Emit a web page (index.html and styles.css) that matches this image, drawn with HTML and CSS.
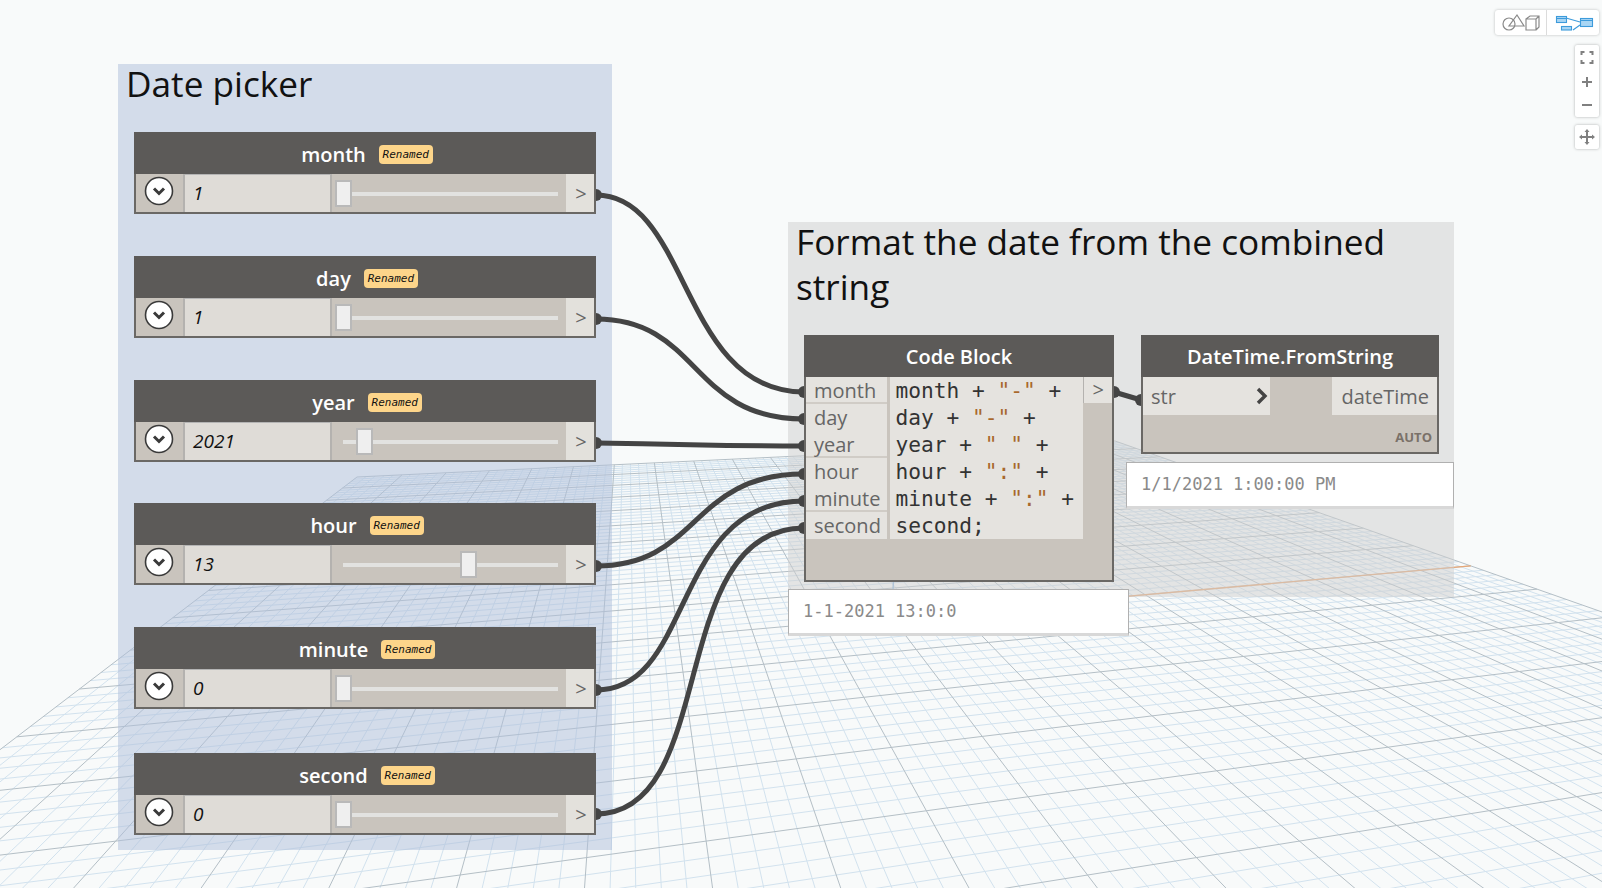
FILE: index.html
```html
<!DOCTYPE html>
<html lang="en">
<head>
    <meta charset="UTF-8">
    <title>Date picker graph</title>
    <link rel="stylesheet" href="styles.css">
</head>
<body>
    <div class="canvas">
        <svg id="grid" class="layer" width="1602" height="888"></svg>

        <div class="group group-date"><h2>Date picker</h2></div>
        <div class="group group-format"><h2>Format the date from the combined string</h2></div>

        <svg class="layer wires" width="1602" height="888">
            <path d="M596 195C690 195 680 392 804 392"/>
            <path d="M596 319C700 319 690 419 804 419"/>
            <path d="M596 443C700 444 700 446 804 446"/>
            <path d="M596 566C700 566 690 474 804 474"/>
            <path d="M596 690C695 690 670 501 804 501"/>
            <path d="M596 814C720 814 665 528 804 528"/>
            <path d="M1114 392L1141 400"/>
            <circle cx="596" cy="195" r="6"/><circle cx="596" cy="319" r="6"/><circle cx="596" cy="443" r="6"/>
            <circle cx="596" cy="566" r="6"/><circle cx="596" cy="690" r="6"/><circle cx="596" cy="814" r="6"/>
            <circle cx="804" cy="392" r="6"/><circle cx="804" cy="419" r="6"/><circle cx="804" cy="446" r="6"/>
            <circle cx="804" cy="474" r="6"/><circle cx="804" cy="501" r="6"/><circle cx="804" cy="528" r="6"/>
            <circle cx="1114" cy="392" r="6"/><circle cx="1141" cy="400" r="6"/>
        </svg>

        <svg class="icon-defs" width="0" height="0">
            <symbol id="expander" viewBox="0 0 30 30">
                <circle cx="15" cy="15" r="13.5" fill="#fff" stroke="#3a3a3a" stroke-width="1.6"/>
                <path d="M10 12.5L15 17.5L20 12.5" fill="none" stroke="#3a3a3a" stroke-width="3"/>
            </symbol>
        </svg>

        <div class="node slider-node node-month">
            <div class="node-title"><span>month</span><span class="badge">Renamed</span></div>
            <div class="slider-body">
                <div class="expander"><svg width="30" height="30"><use href="#expander"/></svg></div>
                <div class="value">1</div>
                <div class="slider"><div class="track"></div><div class="thumb" style="left:3px"></div></div>
                <div class="out-port">&gt;</div>
            </div>
        </div>
        <div class="node slider-node node-day">
            <div class="node-title"><span>day</span><span class="badge">Renamed</span></div>
            <div class="slider-body">
                <div class="expander"><svg width="30" height="30"><use href="#expander"/></svg></div>
                <div class="value">1</div>
                <div class="slider"><div class="track"></div><div class="thumb" style="left:3px"></div></div>
                <div class="out-port">&gt;</div>
            </div>
        </div>
        <div class="node slider-node node-year">
            <div class="node-title"><span>year</span><span class="badge">Renamed</span></div>
            <div class="slider-body">
                <div class="expander"><svg width="30" height="30"><use href="#expander"/></svg></div>
                <div class="value">2021</div>
                <div class="slider"><div class="track"></div><div class="thumb" style="left:24px"></div></div>
                <div class="out-port">&gt;</div>
            </div>
        </div>
        <div class="node slider-node node-hour">
            <div class="node-title"><span>hour</span><span class="badge">Renamed</span></div>
            <div class="slider-body">
                <div class="expander"><svg width="30" height="30"><use href="#expander"/></svg></div>
                <div class="value">13</div>
                <div class="slider"><div class="track"></div><div class="thumb" style="left:128px"></div></div>
                <div class="out-port">&gt;</div>
            </div>
        </div>
        <div class="node slider-node node-minute">
            <div class="node-title"><span>minute</span><span class="badge">Renamed</span></div>
            <div class="slider-body">
                <div class="expander"><svg width="30" height="30"><use href="#expander"/></svg></div>
                <div class="value">0</div>
                <div class="slider"><div class="track"></div><div class="thumb" style="left:3px"></div></div>
                <div class="out-port">&gt;</div>
            </div>
        </div>
        <div class="node slider-node node-second">
            <div class="node-title"><span>second</span><span class="badge">Renamed</span></div>
            <div class="slider-body">
                <div class="expander"><svg width="30" height="30"><use href="#expander"/></svg></div>
                <div class="value">0</div>
                <div class="slider"><div class="track"></div><div class="thumb" style="left:3px"></div></div>
                <div class="out-port">&gt;</div>
            </div>
        </div>

        <div class="node code-node">
            <div class="node-title plain"><span>Code Block</span></div>
            <div class="code-body">
                <div class="code-inputs">
                    <div class="in-row split">month</div>
                    <div class="in-row">day</div>
                    <div class="in-row split">year</div>
                    <div class="in-row">hour</div>
                    <div class="in-row split">minute</div>
                    <div class="in-row">second</div>
                </div>
                <div class="code-text">
                    <div class="code-line">month + <span class="str">"-"</span> +</div>
                    <div class="code-line">day + <span class="str">"-"</span> +</div>
                    <div class="code-line">year + <span class="str">" "</span> +</div>
                    <div class="code-line">hour + <span class="str">":"</span> +</div>
                    <div class="code-line">minute + <span class="str">":"</span> +</div>
                    <div class="code-line">second;</div>
                </div>
                <div class="code-out">&gt;</div>
            </div>
        </div>

        <div class="node fn-node">
            <div class="node-title plain"><span>DateTime.FromString</span></div>
            <div class="fn-ports">
                <div class="fn-in"><span>str</span>
                    <svg width="12" height="18"><path d="M2 2L9 9L2 16" fill="none" stroke="#444" stroke-width="3.4"/></svg>
                </div>
                <div class="fn-out">dateTime</div>
            </div>
            <div class="fn-foot">AUTO</div>
        </div>

        <div class="watch watch-code">1-1-2021 13:0:0</div>
        <div class="watch watch-date">1/1/2021 1:00:00 PM</div>

        <div class="toolbar">
            <div class="view-switch">
                <div class="switch-btn switch-geo">
                    <svg width="52" height="25" fill="none" stroke="#8a8a8a" stroke-width="1.2">
                        <circle cx="14" cy="14" r="6"/>
                        <path d="M22 5L29 16H14Z"/>
                        <path d="M31 9H41V20H31ZM31 9L35 6H44V17L41 20M41 9L44 6"/>
                    </svg>
                </div>
                <div class="switch-btn">
                    <svg width="52" height="25" fill="#a9d6f4" stroke="#3d9bdb" stroke-width="1.1">
                        <path d="M19 8L33 12M26 20L33 15" fill="none"/>
                        <rect x="9.5" y="6.5" width="10" height="6"/>
                        <rect x="14.5" y="16.5" width="10" height="3.5"/>
                        <rect x="33.5" y="8.5" width="12" height="8"/>
                        <path d="M10 8.5H19M34 10.5H45" fill="none"/>
                    </svg>
                </div>
            </div>
            <div class="zoom-box">
                <svg width="24" height="72" fill="none" stroke="#808080">
                    <path d="M8 10V7H11M16 7H19V10M19 15V18H16M11 18H8V15" stroke-width="2" transform="translate(-1.5 0)"/>
                    <path d="M12 32V42M7 37H17" stroke-width="2"/>
                    <path d="M7 60H17" stroke-width="2"/>
                </svg>
            </div>
            <div class="pan-box">
                <svg width="24" height="24" fill="#808080" stroke="#808080">
                    <path d="M12 6V18M6 12H18" fill="none" stroke-width="2"/>
                    <path d="M12 4L14.5 7H9.5ZM12 20L14.5 17H9.5ZM4 12L7 9.5V14.5ZM20 12L17 9.5V14.5Z" stroke="none"/>
                </svg>
            </div>
        </div>
    </div>

    <script src="grid.js"></script>
</body>
</html>
```

FILE: styles.css
```css
* {
    box-sizing: border-box;
}
body {
    margin: 0;
    background-color: #f8fafa;
    font-family: "Open Sans", sans-serif;
}
.canvas {
    position: relative;
    width: 1602px;
    height: 888px;
    overflow: hidden;
}
.layer {
    position: absolute;
    left: 0;
    top: 0;
}
.icon-defs {
    position: absolute;
}

/* groups */
.group {
    position: absolute;
}
.group h2 {
    margin: -3px 0 0;
    font-family: "Open Sans", sans-serif;
    font-weight: 400;
    font-size: 35.2px;
    line-height: 45px;
    color: #111;
}
.group-date {
    left: 118px;
    top: 64px;
    width: 494px;
    height: 786px;
    padding-left: 8px;
    background-color: rgba(176, 192, 218, 0.52);
}
.group-format {
    left: 788px;
    top: 222px;
    width: 666px;
    height: 375px;
    padding-left: 8px;
    background-color: rgba(206, 206, 206, 0.5);
}

/* wires */
.wires path {
    fill: none;
    stroke: #444;
    stroke-width: 5;
}
.wires circle {
    fill: #444;
}

/* nodes */
.node {
    position: absolute;
    display: flex;
    flex-direction: column;
    background-color: #c9c4bd;
    border: 2px solid #6a6865;
    border-top: 0;
}
.node-title {
    display: flex;
    justify-content: center;
    align-items: center;
    gap: 13px;
    flex: none;
    height: 42px;
    margin: 0 -2px;
    padding: 2px 0 0 4px;
    background-color: #5c5a58;
    color: #fff;
    font-size: 20px;
    font-weight: 600;
}
.node-title.plain {
    padding: 0;
}
.badge {
    width: 54px;
    height: 19px;
    border-radius: 4px;
    background-color: #fdd58a;
    color: #111;
    font-family: "DejaVu Sans Mono", monospace;
    font-size: 11px;
    font-style: italic;
    font-weight: 400;
    line-height: 19px;
    text-align: center;
}

/* sliders */
.slider-node {
    left: 134px;
    width: 462px;
    height: 82px;
}
.node-month { top: 132px; }
.node-day { top: 256px; }
.node-year { top: 380px; }
.node-hour { top: 503px; }
.node-minute { top: 627px; }
.node-second { top: 753px; }

.slider-body {
    display: flex;
    flex: 1;
    min-height: 0;
}
.expander {
    display: flex;
    justify-content: center;
    padding: 2px 2px 0 0;
    width: 49px;
    border-right: 2px solid #b4b2af;
}
.value {
    width: 147px;
    padding-left: 8px;
    background-color: #dfdcd7;
    border-top: 1px solid #b4b4b4;
    border-right: 2px solid #b4b2af;
    font-size: 19px;
    font-style: italic;
    line-height: 37px;
    color: #111;
}
.slider {
    position: relative;
    flex: 1;
}
.track {
    position: absolute;
    left: 11px;
    right: 8px;
    top: 18px;
    height: 4px;
    background-color: #e2e2e0;
}
.thumb {
    position: absolute;
    top: 6px;
    width: 17px;
    height: 27px;
    background-color: #efefef;
    border: 2px solid #b9b9b9;
}
.out-port {
    width: 28px;
    padding: 1px 0 0 2px;
    background-color: #e3e1dc;
    color: #666;
    font-size: 20px;
    line-height: 37px;
    text-align: center;
}

/* code block */
.code-node {
    left: 804px;
    top: 335px;
    width: 310px;
    height: 247px;
}
.code-body {
    display: flex;
    align-items: flex-start;
}
.code-inputs {
    width: 82px;
    margin-right: 3px;
}
.in-row {
    height: 27px;
    padding-left: 8px;
    background-color: #e5e3df;
    color: #666;
    font-size: 20px;
    line-height: 28px;
}
.in-row.split {
    box-shadow: inset 0 -2px 0 #d0ccc6;
}
.code-text {
    width: 194px;
    height: 162px;
    padding-left: 5px;
    background-color: #e5e3df;
    color: #333;
    font-family: "DejaVu Sans Mono", monospace;
    font-size: 21.2px;
    line-height: 27px;
}
.code-line {
    white-space: pre;
}
.str {
    color: #a8682c;
}
.code-out {
    width: 29px;
    height: 26px;
    border-left: 1px solid #b4b2af;
    background-color: #e5e3df;
    color: #666;
    font-size: 20px;
    line-height: 25px;
    text-align: center;
}

/* function node */
.fn-node {
    left: 1141px;
    top: 335px;
    width: 298px;
    height: 119px;
}
.fn-ports {
    display: flex;
    justify-content: space-between;
    height: 38px;
    font-size: 20px;
    color: #666;
}
.fn-in {
    display: flex;
    justify-content: space-between;
    align-items: center;
    width: 127px;
    padding: 0 2px 0 8px;
    background-color: #e5e3df;
}
.fn-out {
    width: 105px;
    padding-right: 8px;
    background-color: #e5e3df;
    line-height: 39px;
    text-align: right;
}
.fn-foot {
    padding: 14px 5px 0 0;
    color: #7a7169;
    font-size: 13px;
    font-weight: 700;
    line-height: 16px;
    text-align: right;
}

/* watch bubbles */
.watch {
    position: absolute;
    height: 47px;
    padding-left: 14px;
    background-color: #fff;
    border: 1px solid #b0b0b0;
    border-bottom: 3px solid #d8d8d8;
    color: #8a8a8a;
    font-family: "DejaVu Sans Mono", monospace;
    font-size: 17px;
    line-height: 43px;
}
.watch-code {
    left: 788px;
    top: 589px;
    width: 341px;
}
.watch-date {
    left: 1126px;
    top: 462px;
    width: 328px;
}

/* view controls */
.toolbar {
    position: absolute;
    top: 10px;
    right: 3px;
    display: flex;
    flex-direction: column;
    align-items: flex-end;
}
.view-switch {
    display: flex;
    height: 25px;
    background-color: #fff;
    border-radius: 3px;
    box-shadow: 0 0 3px rgba(0, 0, 0, 0.25);
}
.switch-btn {
    width: 52px;
    height: 25px;
}
.switch-geo {
    border-right: 1px solid #dcdcdc;
}
.zoom-box, .pan-box {
    width: 24px;
    background-color: #fff;
    border-radius: 2px;
    box-shadow: 0 0 3px rgba(0, 0, 0, 0.3);
}
.zoom-box {
    height: 72px;
    margin-top: 10px;
}
.pan-box {
    height: 24px;
    margin-top: 8px;
}
```

FILE: grid.js
```js
// Floor grid: 20 x 20 major cells, 5 minor cells each, drawn through a perspective mapping.
const svg = document.getElementById('grid');
const NS = 'http://www.w3.org/2000/svg';

const far = [357, 477];
const vpU = [4925, 260];
const vpV = [628, 270];
const du = 0.009948;
const dv = -0.0506;

function project(u, v) {
    const a = u * du;
    const b = v * dv;
    const w = 1 + a + b;
    return [
        (far[0] + a * vpU[0] + b * vpV[0]) / w,
        (far[1] + a * vpU[1] + b * vpV[1]) / w,
        w
    ];
}

function addLine(p, q, color, width) {
    const line = document.createElementNS(NS, 'line');
    line.setAttribute('x1', p[0]);
    line.setAttribute('y1', p[1]);
    line.setAttribute('x2', q[0]);
    line.setAttribute('y2', q[1]);
    line.setAttribute('stroke', color);
    line.setAttribute('stroke-width', width);
    svg.appendChild(line);
}

// keep only the part of a line in front of the camera
function drawU(u, color, width) {
    const vMax = Math.min(20, (0.12 - 1 - u * du) / dv);
    addLine(project(u, 0), project(u, vMax), color, width);
}
function drawV(v, color, width) {
    const uMin = Math.max(0, (0.12 - 1 - v * dv) / du);
    addLine(project(uMin, v), project(20, v), color, width);
}

for (let i = 0; i <= 100; i++) {
    if (i % 5 !== 0) {
        drawU(i / 5, '#d2e2ee', 1);
        drawV(i / 5, '#d2e2ee', 1);
    }
}
for (let i = 0; i <= 20; i++) {
    drawU(i, '#b4bfc6', 1);
    drawV(i, '#b4bfc6', 1);
}

// axes
addLine(project(10, 10), project(20, 10), '#e8a877', 1.4);
addLine(project(10, 10), [895, 550], '#8fb8e0', 1.4);
```
